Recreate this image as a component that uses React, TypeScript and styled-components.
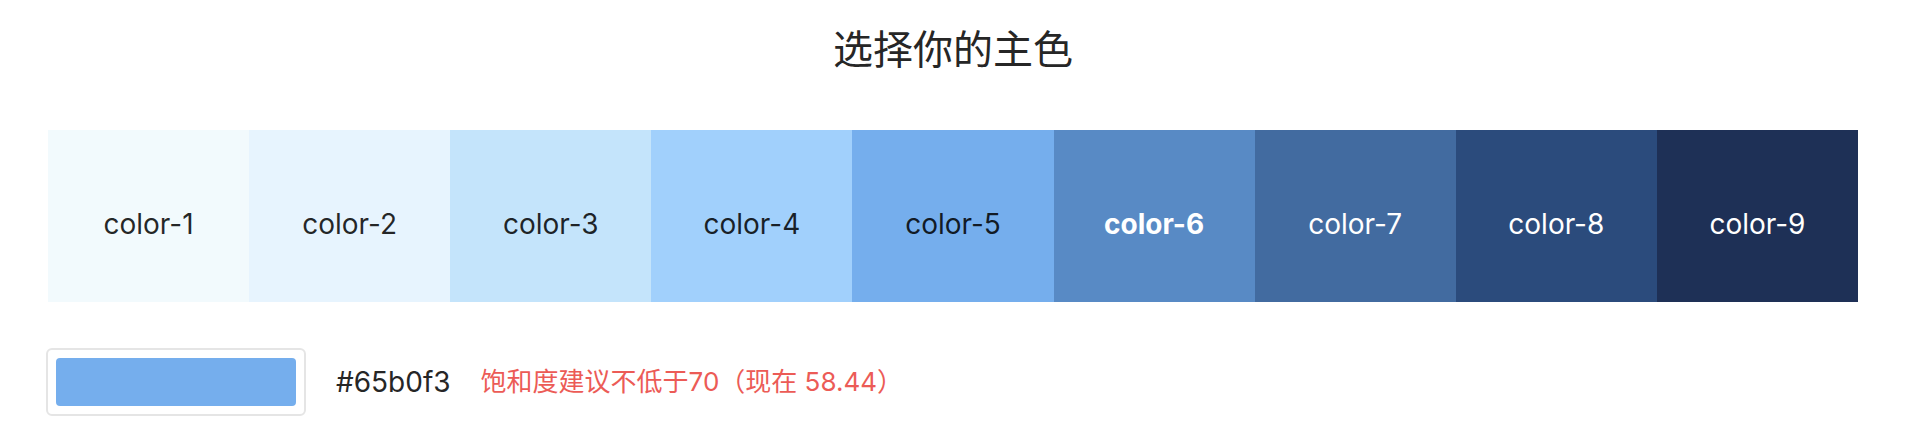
import React from "react";
import styled, { createGlobalStyle } from "styled-components";

const PRIMARY = "#75aeed";

const palette = [
  { name: "color-1", fill: "#f2fafd" },
  { name: "color-2", fill: "#e7f4fe" },
  { name: "color-3", fill: "#c4e4fb" },
  { name: "color-4", fill: "#a1d0fc" },
  { name: "color-5", fill: PRIMARY },
  { name: "color-6", fill: "#588ac5", light: true, bold: true },
  { name: "color-7", fill: "#426ba0", light: true },
  { name: "color-8", fill: "#2b4b7c", light: true },
  { name: "color-9", fill: "#1e3056", light: true },
];

const GlobalStyle = createGlobalStyle`
  * { box-sizing: border-box; }
  body {
    margin: 0;
    background: #ffffff;
    color: #262626;
    font-family: Inter, "Noto Sans CJK SC", sans-serif;
    font-size: 28px;
    line-height: 44px;
  }
`;

const Page = styled.main`
  padding: 20px 48px 10px;
`;

const Title = styled.h1`
  margin: 0 0 50px;
  font-size: 40px;
  font-weight: 400;
  line-height: 60px;
  text-align: center;
`;

const Palette = styled.ul`
  display: flex;
  margin: 0;
  padding: 0;
  list-style: none;
`;

const Swatch = styled.li<{ $fill: string; $light?: boolean; $bold?: boolean }>`
  flex: 1;
  height: 172px;
  padding-top: 72px;
  background: ${(p) => p.$fill};
  color: ${(p) => (p.$light ? "#ffffff" : "rgba(0, 0, 0, 0.85)")};
  font-weight: ${(p) => (p.$bold ? 700 : 400)};
  text-align: center;
`;

const Picker = styled.div`
  display: flex;
  align-items: center;
  gap: 30px;
  margin: 46px -2px 0;
`;

const ColorButton = styled.button`
  width: 260px;
  padding: 8px;
  border: 2px solid #e5e5e5;
  border-radius: 6px;
  background: #ffffff;
  cursor: pointer;
`;

const ColorFill = styled.span`
  display: block;
  height: 48px;
  border-radius: 4px;
  background: ${PRIMARY};
`;

const HexValue = styled.span``;

const Warning = styled.span`
  color: #ec5b56;
  font-size: 26px;
`;

export default function App() {
  return (
    <>
      <GlobalStyle />
      <Page lang="zh-CN">
        <Title>选择你的主色</Title>
        <Palette>
          {palette.map((c) => (
            <Swatch key={c.name} $fill={c.fill} $light={c.light} $bold={c.bold}>
              {c.name}
            </Swatch>
          ))}
        </Palette>
        <Picker>
          <ColorButton type="button" aria-labelledby="hex-value">
            <ColorFill />
          </ColorButton>
          <HexValue id="hex-value">#65b0f3</HexValue>
          <Warning>饱和度建议不低于70（现在 58.44）</Warning>
        </Picker>
      </Page>
    </>
  );
}
